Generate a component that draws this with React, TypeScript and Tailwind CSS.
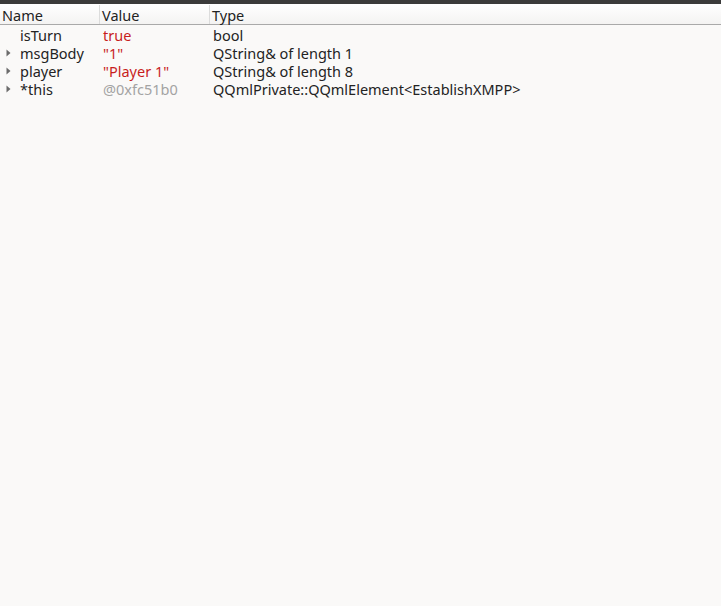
const rows = [
  { name: "isTurn", value: "true", type: "bool", kind: "red", expandable: false },
  { name: "msgBody", value: '"1"', type: "QString& of length 1", kind: "red", expandable: true },
  { name: "player", value: '"Player 1"', type: "QString& of length 8", kind: "red", expandable: true },
  { name: "*this", value: "@0xfc51b0", type: "QQmlPrivate::QQmlElement<EstablishXMPP>", kind: "gray", expandable: true },
];

function Arrow() {
  return (
    <svg width="5" height="8" viewBox="0 0 5 8" className="shrink-0">
      <path d="M0.5 0.5 L4.5 4 L0.5 7.5 Z" fill="#6b6b6b" />
    </svg>
  );
}

export default function App() {
  return (
    <div
      className="w-[721px] h-[606px] bg-[#faf9f8] text-[#232323] text-[14.5px] flex flex-col overflow-hidden"
      style={{ fontFamily: '"Noto Sans", "Open Sans", sans-serif' }}
    >
      <div className="h-[4px] bg-[#3b3b3b]" />
      <div className="flex h-[21px] bg-gradient-to-b from-[#ffffff] to-[#f4f3f2] border-b border-[#a9a9a9] leading-[20px] pt-[1px]">
        <div className="w-[100px] pl-[2px] border-r border-[#dcdcdc]">Name</div>
        <div className="w-[110px] pl-[2px] border-r border-[#dcdcdc]">Value</div>
        <div className="flex-1 pl-[2px]">Type</div>
      </div>
      <div className="pt-[1px]">
        {rows.map((r) => (
          <div key={r.name} className="flex h-[18px] items-center leading-[18px]">
            <div className="w-[100px] flex items-center">
              <div className="w-[20px] flex justify-center pl-[3px] pr-[7px]">
                {r.expandable && <Arrow />}
              </div>
              <span>{r.name}</span>
            </div>
            <div
              className={
                "w-[110px] pl-[3px] " +
                (r.kind === "red" ? "text-[#c81e1e]" : "text-[#a3a3a3]")
              }
            >
              {r.value}
            </div>
            <div className="flex-1 pl-[3px]">{r.type}</div>
          </div>
        ))}
      </div>
    </div>
  );
}
